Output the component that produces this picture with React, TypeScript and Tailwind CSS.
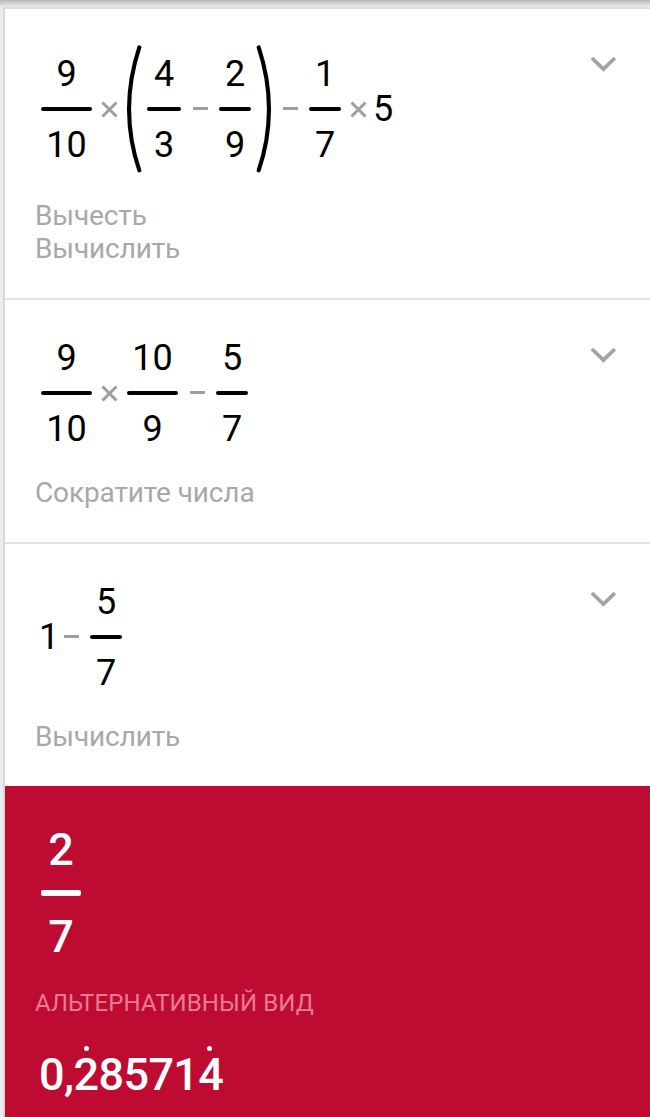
import type { ReactNode } from 'react';

interface FractionProps {
  top: string;
  bottom: string;
  width: string;
}

function Fraction({ top, bottom, width }: FractionProps) {
  return (
    <div className={`flex flex-col items-center text-[36px] leading-[36px] ${width}`}>
      <span>{top}</span>
      <div className="mt-[15px] mb-4 h-1 w-full rounded-full bg-black" />
      <span>{bottom}</span>
    </div>
  );
}

function Times() {
  return (
    <div className="flex w-[35px] justify-center">
      <svg width="17" height="17" viewBox="0 0 17 17" fill="none" stroke="#9e9e9e" strokeWidth="3">
        <path d="M1.5 1.5 15.5 15.5M15.5 1.5 1.5 15.5" />
      </svg>
    </div>
  );
}

function Minus() {
  return (
    <div className="flex w-[38px] justify-center pb-[3px]">
      <div className="h-[3px] w-[15px] bg-[#9e9e9e]" />
    </div>
  );
}

function Paren({ close = false }: { close?: boolean }) {
  return (
    <svg
      width="15" height="129" viewBox="0 0 15 129" fill="none"
      stroke="#000" strokeWidth="4.1" strokeLinecap="round"
      className={close ? 'ml-[5px] -scale-x-100' : 'mr-[5px]'}
    >
      <path d="M12.3 2.4Q-8.2 64.5 12.3 125.4" />
    </svg>
  );
}

function Chevron() {
  return (
    <svg width="26" height="16" viewBox="0 0 26 16" fill="none" stroke="#a3a3a3" strokeWidth="3.8">
      <path d="M1.9 2 13.4 13.2 24.9 2" />
    </svg>
  );
}

interface StepProps {
  padding: string;
  hints: string[];
  children: ReactNode;
}

function Step({ padding, hints, children }: StepProps) {
  return (
    <section className="flex items-start justify-between bg-white pr-[34px] pb-[33px] pl-[30px]">
      <div className={padding}>
        <div className="flex items-center pl-[6px]">{children}</div>
        <div className="text-[28px] leading-[33px] tracking-[-0.12px] text-[#a8a8a8]">
          {hints.map(h => <p key={h}>{h}</p>)}
        </div>
      </div>
      <div className="pt-[47px]">
        <Chevron />
      </div>
    </section>
  );
}

function DottedDigit({ digit, dot }: { digit: string; dot: string }) {
  return (
    <span className="relative">
      {digit}
      <span className={`absolute top-[-2px] size-[5px] rounded-full bg-white ${dot}`} />
    </span>
  );
}

export default function App() {
  return (
    <div className="flex h-[1117px] w-[650px] flex-col overflow-hidden bg-white font-[Roboto,sans-serif] text-black">
      <div className="h-[7px] shrink-0 bg-linear-to-b from-[#b8b8b8] to-[#ececec]" />
      <div className="flex flex-1">
        <div className="w-[5px] shrink-0 border-r-2 border-[#d8d8d8] bg-[#ececec]" />
        <main className="flex flex-1 flex-col border-t-2 border-[#dedede]">
          <div className="divide-y-2 divide-[#e2e2e2]">
            <Step padding="pt-9 space-y-[25px]" hints={['Вычесть', 'Вычислить']}>
              <Fraction top="9" bottom="10" width="w-[51px]" />
              <Times />
              <Paren />
              <Fraction top="4" bottom="3" width="w-[34px]" />
              <Minus />
              <Fraction top="2" bottom="9" width="w-8" />
              <Paren close />
              <Minus />
              <Fraction top="1" bottom="7" width="w-8" />
              <Times />
              <span className="-ml-[3px] pb-px text-[36px] leading-[36px]">5</span>
            </Step>

            <Step padding="pt-10 space-y-[29px]" hints={['Сократите числа']}>
              <Fraction top="9" bottom="10" width="w-[51px]" />
              <Times />
              <Fraction top="10" bottom="9" width="w-[51px]" />
              <Minus />
              <Fraction top="5" bottom="7" width="w-8" />
            </Step>

            <Step padding="pt-10 space-y-[29px]" hints={['Вычислить']}>
              <span className="-mr-[7px] -ml-[2px] pb-[2px] text-[36px] leading-[36px]">1</span>
              <Minus />
              <Fraction top="5" bottom="7" width="w-8" />
            </Step>
          </div>

          {/* Final answer */}
          <section className="flex-1 bg-[#be0b31] pt-[42px] pl-[30px] text-white">
            <div className="ml-[6px] flex w-10 flex-col items-center text-[45px] leading-[44px] font-medium">
              <span>2</span>
              <div className="mt-[18px] mb-[19px] h-[6px] w-full rounded-[2px] bg-white" />
              <span>7</span>
            </div>
            <h2 className="mt-[30px] text-[24px] leading-[28px] tracking-[0.1px] text-[#e97b94]">АЛЬТЕРНАТИВНЫЙ ВИД</h2>
            <p className="mt-[32px] ml-[4px] text-[45px] leading-[52px] font-medium tracking-[-0.6px]">
              0,<DottedDigit digit="2" dot="left-[11px]" />8571<DottedDigit digit="4" dot="left-[9px]" />
            </p>
          </section>
        </main>
      </div>
    </div>
  );
}
